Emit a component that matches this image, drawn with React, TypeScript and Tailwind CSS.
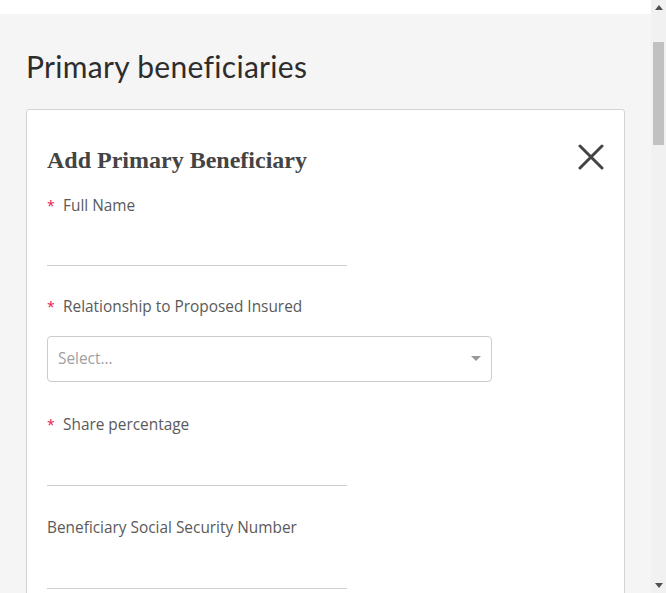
import React from "react";

const Label = ({ text, required }: { text: string; required?: boolean }) => (
  <div className="flex items-center h-[20px] text-[15.4px] text-[#5a5a5a] leading-[20px]">
    {required && <span className="text-[#e8204f] w-[16px] text-[14px]">*</span>}
    <span>{text}</span>
  </div>
);

const Underline = ({ h = "h-[51px]" }: { h?: string }) => (
  <div className={`w-[300px] ${h} border-b border-[#cfcfcf]`} />
);

export default function App() {
  return (
    <div
      className="h-[593px] overflow-hidden flex bg-[#f5f5f5]"
      style={{ fontFamily: '"Open Sans", "Noto Sans", sans-serif' }}
    >
      <div className="flex-1 min-w-0">
        <div className="h-[14px] bg-white" />
        <div className="px-[26px]">
          <h1
            className="mt-[34px] text-[30px] leading-[36px] tracking-[0.3px] text-[#2d2d2d] font-normal"
            style={{ fontFamily: 'Lato, "Open Sans", sans-serif' }}
          >
            Primary beneficiaries
          </h1>
          <div className="mt-[25px] w-[599px] bg-white border border-[#d4d4d4] rounded-[3px] px-[20px] pt-[36px] pb-[60px]">
            <div className="flex items-center justify-between">
              <h2
                className="text-[24px] leading-[28px] font-bold text-[#444]"
                style={{ fontFamily: '"Liberation Serif", "Times New Roman", serif' }}
              >
                Add Primary Beneficiary
              </h2>
              <svg width="26" height="26" viewBox="0 0 26 26" className="-mt-[6px]">
                <path d="M2 2 L24 24 M24 2 L2 24" stroke="#444" strokeWidth="3" strokeLinecap="round" />
              </svg>
            </div>
            <div className="mt-[22px]">
              <Label text="Full Name" required />
              <Underline h="h-[50px]" />
            </div>
            <div className="mt-[31px]">
              <Label text="Relationship to Proposed Insured" required />
              <div className="mt-[19px] w-[445px] h-[46px] border border-[#cccccc] rounded-[4px] flex items-center justify-between pl-[10px] pr-[10px]">
                <span className="text-[15.4px] text-[#a0a0a0]">Select...</span>
                <svg width="10" height="6" viewBox="0 0 10 6">
                  <path d="M0 0 L10 0 L5 5 Z" fill="#999" />
                </svg>
              </div>
            </div>
            <div className="mt-[33px]">
              <Label text="Share percentage" required />
              <Underline h="h-[51px]" />
            </div>
            <div className="mt-[32px]">
              <Label text="Beneficiary Social Security Number" />
              <Underline h="h-[51px]" />
            </div>
          </div>
        </div>
      </div>
      <div className="w-[15px] shrink-0 bg-[#f1f1f1] flex flex-col items-center">
        <div className="h-[15px] w-full flex items-center justify-center">
          <svg width="8" height="5" viewBox="0 0 8 5">
            <path d="M0 5 L8 5 L4 0 Z" fill="#505050" />
          </svg>
        </div>
        <div className="h-[27px]" />
        <div className="w-[11px] h-[103px] bg-[#c1c1c1]" />
        <div className="flex-1" />
        <div className="h-[15px] w-full flex items-center justify-center">
          <svg width="8" height="5" viewBox="0 0 8 5">
            <path d="M0 0 L8 0 L4 5 Z" fill="#505050" />
          </svg>
        </div>
      </div>
    </div>
  );
}
